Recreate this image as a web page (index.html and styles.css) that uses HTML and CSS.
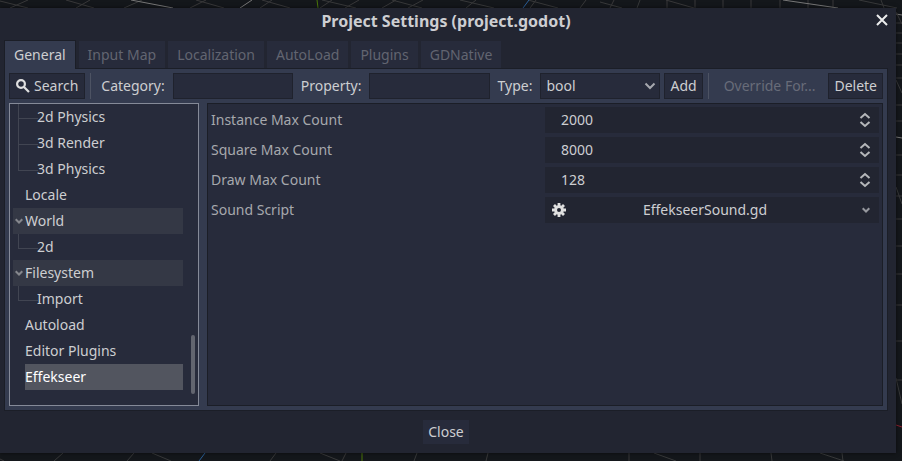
FILE: index.html
```html
<!DOCTYPE html>
<html lang="en">
<head>
<meta charset="utf-8">
<title>Project Settings (project.godot)</title>
<link rel="stylesheet" href="styles.css">
</head>
<body>
<svg class="viewport-grid" viewBox="0 0 902 461" preserveAspectRatio="none" aria-hidden="true">
  <g fill="none" stroke="#38393a">
    <path d="M0 1l28 7M10 8L28 0M66 0l28 8M76 8L90 0M196 0l28 8M190 8l16-8M124 8l18-8M262 0l28 8M260 8l12-8M322 0l34 8M320 8l12-8M345 8l14-8M392 0l30 8M382 8l14-8M408 8l15-8M460 0l34 8M466 8l10-8M528 0l30 8M530 8l6-8M580 8l6-8M600 2l22 6M610 8l4-8M637 8l3-8M666 0l28 8M667 8V0M695 8V0M723 0v8M751 0v8M780 0v8M808 0v8M833 0v8M859 0l38 8M881 0l3 8"/>
    <path stroke="#777" d="M131 0l42 8M240 8l12-8M783 0l55 8M896 14l6 1M896 137l6 1"/>
    <path d="M896 12l6 12M896 23h6M896 33h6M896 43h6M896 54h6M896 65h6M896 78h6M896 80l6 13M896 105h6M896 121h6M896 155h6M896 175h6M896 187l6 17M896 196h6M896 219h6M896 246h6M896 274h6M896 305h6M896 341h6M896 380h6M896 378l6 26"/>
    <path d="M0 459l4 2M54 461l9-8M127 461l7-8M152 453l19 8M270 461l6-8M320 453l20 8M342 461l4-8M414 461l3-8M486 461l2-8M629 461v-8M654 453l22 8M700 461v-8M772 461l-1-8M820 453l24 8M843 461l-1-8"/>
    <path stroke="#4b7709" d="M317 0l1 8M362 453v8"/>
    <path stroke="#2a5f99" d="M523 8l6-8M199 461l6-8"/>
    <path stroke="#8e1f2d" d="M896 425l6 2"/>
  </g>
</svg>

<main class="dialog">
  <header class="title-bar">
    <h1>Project Settings (project.godot)</h1>
    <button class="close-x" aria-label="Close window">
      <svg width="12" height="12" viewBox="0 0 12 12"><path d="M1 1l10 10M11 1L1 11"/></svg>
    </button>
  </header>

  <div class="tabs" role="tablist">
    <button class="tab active" role="tab" aria-selected="true">General</button>
    <button class="tab" role="tab">Input Map</button>
    <button class="tab" role="tab">Localization</button>
    <button class="tab" role="tab">AutoLoad</button>
    <button class="tab" role="tab">Plugins</button>
    <button class="tab" role="tab">GDNative</button>
  </div>

  <section class="panel">
    <div class="toolbar">
      <button class="btn search">
        <svg width="14" height="14" viewBox="0 0 14 14"><circle cx="5" cy="5" r="3.9"/><path d="M8 8l5 5"/></svg>
        Search
      </button>
      <span class="separator"></span>
      <label for="category">Category:</label>
      <input id="category" class="field" type="text">
      <label for="property">Property:</label>
      <input id="property" class="field" type="text">
      <label for="type">Type:</label>
      <span class="select-wrap">
        <select id="type" class="field"><option>bool</option></select>
        <svg class="select-arrow" width="12" height="8" viewBox="0 0 12 8"><path d="M1.500 1.500L6 6l4.500-4.500"/></svg>
      </span>
      <button class="btn add">Add</button>
      <span class="separator"></span>
      <button class="btn flat" disabled>Override For...</button>
      <button class="btn">Delete</button>
    </div>

    <div class="content">
      <nav class="tree">
        <ul>
          <li class="child more">2d Physics</li>
          <li class="child more">3d Render</li>
          <li class="child">3d Physics</li>
          <li>Locale</li>
          <li class="group"><svg width="8" height="6" viewBox="0 0 8 6"><path d="M.7 1.200L4 4.500l3.300-3.300"/></svg>World</li>
          <li class="child">2d</li>
          <li class="group"><svg width="8" height="6" viewBox="0 0 8 6"><path d="M.7 1.200L4 4.500l3.300-3.300"/></svg>Filesystem</li>
          <li class="child">Import</li>
          <li>Autoload</li>
          <li>Editor Plugins</li>
          <li class="selected">Effekseer</li>
        </ul>
        <span class="scroll-thumb"></span>
      </nav>

      <div class="inspector">
        <div class="row">
          <label for="instances">Instance Max Count</label>
          <div class="value"><input id="instances" type="text" value="2000"><svg class="spin" width="12" height="16" viewBox="0 0 12 16"><path d="M1.500 6L6 2l4.500 4M1.500 10L6 14l4.500-4"/></svg></div>
        </div>
        <div class="row">
          <label for="squares">Square Max Count</label>
          <div class="value"><input id="squares" type="text" value="8000"><svg class="spin" width="12" height="16" viewBox="0 0 12 16"><path d="M1.500 6L6 2l4.500 4M1.500 10L6 14l4.500-4"/></svg></div>
        </div>
        <div class="row">
          <label for="draws">Draw Max Count</label>
          <div class="value"><input id="draws" type="text" value="128"><svg class="spin" width="12" height="16" viewBox="0 0 12 16"><path d="M1.500 6L6 2l4.500 4M1.500 10L6 14l4.500-4"/></svg></div>
        </div>
        <div class="row">
          <label for="script">Sound Script</label>
          <button id="script" class="value resource">
            <svg class="gear" width="14" height="14" viewBox="0 0 14 14"><circle cx="7" cy="7" r="3.4"/><path d="M7 0v3M7 11v3M0 7h3M11 7h3M2 2l2.200 2.200M9.800 9.800L12 12M12 2L9.800 4.200M4.200 9.800L2 12"/></svg>
            <span>EffekseerSound.gd</span>
            <svg class="chevron" width="8" height="6" viewBox="0 0 8 6"><path d="M.7 1.200L4 4.500l3.300-3.300"/></svg>
          </button>
        </div>
      </div>
    </div>
  </section>

  <footer><button class="btn close">Close</button></footer>
</main>
</body>
</html>
```
FILE: styles.css
```css
* { box-sizing: border-box; }

body {
  margin: 0;
  min-height: 100vh;
  padding: 8px 6px 8px 0;
  display: flex;
  background: #14171b;
  color: #cdced1;
  font: 14px/20px "Noto Sans", sans-serif;
}

button, input, select { font: inherit; color: inherit; margin: 0; border: 0; border-radius: 0; outline: 0; }
svg { fill: none; stroke: currentColor; stroke-width: 2; flex: none; }

.viewport-grid {
  position: absolute;
  inset: 0;
  width: 100%;
  height: 100%;
  stroke-width: 1;
}

.dialog {
  position: relative;
  flex: 1;
  min-width: 0;
  display: flex;
  flex-direction: column;
  padding: 0 8px 0 4px;
  background: #222531;
  box-shadow: 0 0 4px #0009;
}

.title-bar {
  display: flex;
  align-items: center;
  justify-content: center;
  height: 26px;
  margin-bottom: 6px;
}
h1 { margin: 0; font-size: 16px; line-height: 24px; font-weight: 700; }
.close-x {
  position: absolute;
  top: 6px;
  right: 8px;
  display: flex;
  padding: 0;
  background: none;
  color: #eceded;
}

.tabs { display: flex; gap: 3px; height: 29px; margin-bottom: -1px; }
.tab {
  padding: 0 9px;
  border-top: 1px solid #222531;
  background: #272b3b;
  color: #626571;
}
.tab.active {
  position: relative;
  border: 1px solid #1b1e27;
  border-bottom: 0;
  background: #343b4f;
  color: #cdced1;
}

.panel {
  flex: 1;
  display: flex;
  flex-direction: column;
  gap: 4px;
  padding: 4px;
  border: 1px solid #1b1e27;
  background: #343b4f;
}

.toolbar { display: flex; align-items: center; gap: 4px; height: 26px; }
.toolbar label { padding: 0 4px; }
.btn { height: 26px; padding: 0 5px; border: 1px solid #1f222d; background: #272b3b; white-space: nowrap; }
.search { display: flex; align-items: center; gap: 4px; padding: 0 6px; }
.search svg { color: #e0e0e0; stroke-width: 2.2; }
.flat { padding: 0 8px; border-color: transparent; background: none; color: #686c79; }
.separator { width: 1px; height: 26px; margin: 0 2px 0 1px; background: #4d5363; }
.field { flex: 1 0 20px; width: 0; min-width: 0; height: 26px; padding: 0 5px; border: 1px solid #1f222d; background: #272b3b; }
.select-wrap { flex: 1 0 20px; display: flex; position: relative; }
.select-wrap select { appearance: none; }
.select-arrow { position: absolute; right: 4px; top: 9px; color: #a6a8ae; pointer-events: none; }

.content { flex: 1; display: flex; gap: 8px; }
.tree { position: relative; width: 190px; padding: 0 15px 0 3px; border: 1px solid #858a98; background: #272b3b; }
.tree ul { margin: 0; padding: 0; list-style: none; }
.tree li { position: relative; height: 26px; line-height: 26px; padding-left: 12px; }
.tree .child { padding-left: 24px; }
.tree .child::before {
  content: "";
  position: absolute;
  left: 5px;
  top: 0;
  width: 19px;
  height: 14px;
  border: solid #414552;
  border-width: 0 0 1px 1px;
}
.tree .more::after { content: ""; position: absolute; left: 5px; top: 14px; height: 12px; border-left: 1px solid #414552; }
.tree .group { display: flex; align-items: center; gap: 2px; padding-left: 2px; background: #343845; }
.tree .group svg { color: #85878d; }
.tree .selected { margin-left: 12px; padding-left: 0; background: #52555f; color: #fff; }
.scroll-thumb { position: absolute; right: 3px; bottom: 11px; width: 4px; height: 59px; border-radius: 2px; background: #62656f; }

.inspector { flex: 1; display: flex; flex-direction: column; gap: 4px; padding: 3px; border: 1px solid #1b1e27; background: #272b3b; }
.row { display: grid; grid-template-columns: 1fr 1fr; align-items: center; height: 26px; }
.row label { color: #a6a8ad; }
.value { display: flex; align-items: center; height: 26px; padding: 0 8px 0 16px; background: #222531; }
.value input { flex: 1; min-width: 0; padding: 0; background: none; }
.value svg { color: #b5b7ba; }
.resource { padding: 0 9px 0 7px; }
.resource span { flex: 1; padding-right: 18px; text-align: center; }
.value .gear { color: #e0e0e0; stroke-width: 2.8; }
.value .chevron { color: #96989e; }

footer { display: flex; justify-content: center; padding: 9px 0; }
.close { height: 24px; border: 0; }
```
